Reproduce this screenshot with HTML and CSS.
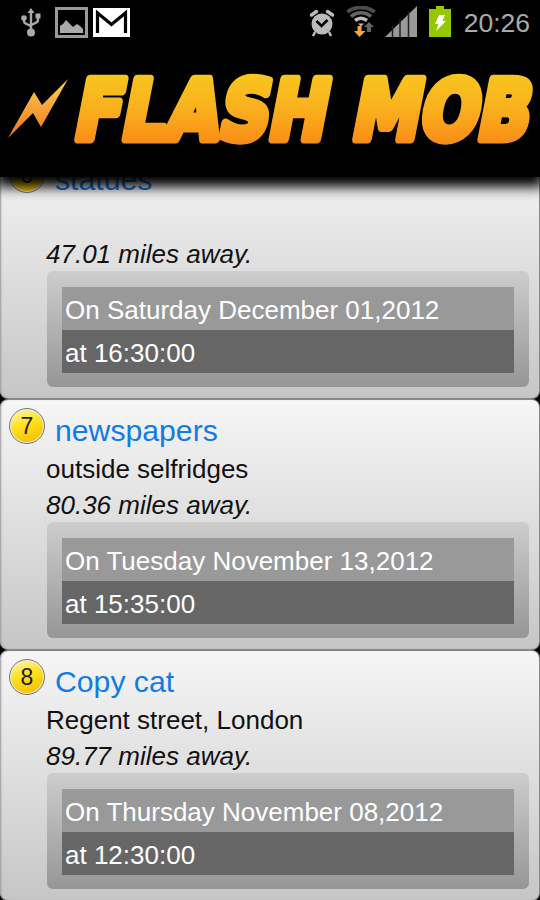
FILE: index.html
```html
<!DOCTYPE html>
<html>
<head>
  <meta charset="utf-8">
  <title>Flash Mob</title>
  <link rel="stylesheet" href="styles.css">
</head>
<body>
  <header class="header">
    <div class="statusbar">
      <svg class="usb" width="22" height="30" viewBox="0 0 22 30" fill="none" stroke="#aaa" stroke-width="2.400">
        <path d="M11 4v20M4 10v3c0 4 7 3 7 6M18 8v4c0 4-7 3-7 6"/>
        <path d="M11 0l3.500 5h-7z" fill="#aaa" stroke="none"/>
        <circle cx="4" cy="10" r="2.800" fill="#aaa" stroke="none"/>
        <rect x="15.500" y="5.500" width="5" height="5" fill="#aaa" stroke="none"/>
        <circle cx="11" cy="24.500" r="4" fill="#aaa" stroke="none"/>
      </svg>
      <svg class="picture" width="33" height="31" viewBox="0 0 33 31">
        <rect x="1.500" y="1.500" width="30" height="28" fill="#000" stroke="#999" stroke-width="3"/>
        <path d="M5 26v-7l3-2 3-4 4 4 3 3 4-3 3 2 3 3v4z" fill="#aaa"/>
      </svg>
      <svg class="mail" width="37" height="29" viewBox="0 0 37 29">
        <rect width="37" height="29" fill="#fff"/>
        <path d="M4.500 25V5L18.500 16.500 32.500 5v20" fill="none" stroke="#000" stroke-width="3.200"/>
      </svg>
      <svg class="alarm" width="26" height="28" viewBox="0 0 26 28">
        <circle cx="13" cy="15" r="10.500" fill="#bbb"/>
        <path d="M2.500 6l5-3.500M23.500 6l-5-3.500" stroke="#bbb" stroke-width="3.500" stroke-linecap="round"/>
        <path d="M6 23l-2 4M20 23l2 4" stroke="#bbb" stroke-width="2.500"/>
        <path d="M7.500 12l5 5 6-6" fill="none" stroke="#000" stroke-width="2.600"/>
      </svg>
      <svg class="wifi" width="32" height="31" viewBox="0 0 32 31" fill="none">
        <path d="M1.500 6c7-6 20-6 27 0" stroke="#4c4c4c" stroke-width="4"/>
        <path d="M5 10.500c6-5 14-5 20 0" stroke="#666" stroke-width="3.500"/>
        <path d="M9 14.500c4-3 8-3 12 0" stroke="#bbb" stroke-width="3.500"/>
        <path d="M12 17.500h6l-3 3z" fill="#bbb"/>
        <path d="M11.500 20h4v5h4l-6 6-5.500-6h3.500z" fill="#f7a540"/>
        <path d="M23 16l5 5h-3v5h-4v-5h-3z" fill="#666"/>
      </svg>
      <svg class="signal" width="32" height="31" viewBox="0 0 32 31">
        <path d="M0 31L32 0v31z" fill="#999"/>
        <path d="M7.500 20v11M15 13v18M23.500 5v26" stroke="#222" stroke-width="1.500"/>
      </svg>
      <svg class="battery" width="22" height="31" viewBox="0 0 22 31">
        <path d="M7 0h8v3h7v28H0V3h7z" fill="#96c800"/>
        <path d="M10 9h6l-2.500 6H17L7 25l2.500-7H6z" fill="#fff"/>
      </svg>
      <span class="clock">20:26</span>
    </div>
    <svg class="logo" width="540" height="131" viewBox="0 46 540 131">
      <defs>
        <linearGradient id="gold" gradientUnits="userSpaceOnUse" x1="0" y1="75" x2="0" y2="144">
          <stop offset="0" stop-color="#f8c51f"/>
          <stop offset="0.500" stop-color="#fab01d"/>
          <stop offset="1" stop-color="#f98b17"/>
        </linearGradient>
        <linearGradient id="bolt" gradientUnits="userSpaceOnUse" x1="0" y1="80" x2="0" y2="138">
          <stop offset="0" stop-color="#fbd050"/>
          <stop offset="1" stop-color="#f3741f"/>
        </linearGradient>
      </defs>
      <path d="M68 79L41 127 33 113 8 138 34 92 42 105z" fill="url(#bolt)"/>
      <g class="wordmark" transform="translate(0 144) skewX(-11) translate(0 -144)">
        <text x="71" y="139.500" textLength="252" lengthAdjust="spacingAndGlyphs">FLASH</text>
        <text x="349" y="139.500" textLength="177" lengthAdjust="spacingAndGlyphs">MOB</text>
      </g>
    </svg>
  </header>

  <main class="list">
    <div class="card">
      <div class="title"><span class="number">6</span>statues</div>
      <div class="place"></div>
      <div class="distance">47.01 miles away.</div>
      <div class="when">
        <div class="date">On Saturday December 01,2012</div>
        <div class="time">at 16:30:00</div>
      </div>
    </div>
    <div class="card">
      <div class="title"><span class="number">7</span>newspapers</div>
      <div class="place">outside selfridges</div>
      <div class="distance">80.36 miles away.</div>
      <div class="when">
        <div class="date">On Tuesday November 13,2012</div>
        <div class="time">at 15:35:00</div>
      </div>
    </div>
    <div class="card">
      <div class="title"><span class="number">8</span>Copy cat</div>
      <div class="place">Regent street, London</div>
      <div class="distance">89.77 miles away.</div>
      <div class="when">
        <div class="date">On Thursday November 08,2012</div>
        <div class="time">at 12:30:00</div>
      </div>
    </div>
  </main>
</body>
</html>
```
FILE: styles.css
```css
* {
  box-sizing: border-box;
}

body {
  margin: 0;
  height: 900px;
  overflow: hidden;
  background: #000;
  font-family: "Liberation Sans", Arial, sans-serif;
  font-size: 26px;
  color: #111;
}

.header {
  position: relative;
  z-index: 1;
  height: 177px;
  background: #000;
  box-shadow: 0 6px 12px 4px #000;
}

.statusbar {
  display: flex;
  height: 46px;
  padding: 6px 10px 0 20px;
}

.usb {
  margin-top: 2px;
}

.picture {
  margin: 1px 0 0 13px;
}

.mail {
  margin: 2px 0 0 5px;
}

.alarm {
  margin: 3px 0 0 auto;
}

.wifi {
  margin-left: 11px;
}

.signal {
  margin-left: 7px;
}

.battery {
  margin-left: 12px;
}

.clock {
  margin-left: 13px;
  line-height: 34px;
  font-size: 26.5px;
  color: #aaa;
}

.logo {
  display: block;
}

.wordmark {
  font-family: "DejaVu Sans", sans-serif;
  font-weight: bold;
  font-size: 82px;
  fill: url(#gold);
  stroke: url(#gold);
  stroke-width: 9px;
  stroke-linejoin: round;
}

.list {
  margin-top: -29px;
}

.card {
  height: 251px;
  padding: 7px 10px 0 9px;
  border: 1px solid #888;
  border-width: 1px 1px 1px 0;
  border-radius: 8px;
  background: linear-gradient(#f6f6f6, #c6c6c6);
  box-shadow: inset 2px 0 2px -1px #999;
}

.title {
  display: flex;
  height: 43px;
  line-height: 47px;
  font-size: 30.2px;
  color: #127be6;
}

.number {
  width: 36px;
  height: 36px;
  margin: 1px 10px 0 0;
  border: 1px solid #777;
  border-radius: 50%;
  background: linear-gradient(160deg, #fff4b0 5%, #ffe11c 45%, #f5b800);
  box-shadow: inset 0 0 0 1px #eee;
  line-height: 35px;
  font-size: 23px;
  text-align: center;
  color: #222;
}

.place,
.distance {
  height: 36px;
  padding-left: 37px;
  line-height: 38px;
}

.distance {
  font-style: italic;
}

.when {
  height: 116px;
  margin-left: 38px;
  padding: 16px 15px;
  border-radius: 6px;
  background: linear-gradient(#cdcdcd, #969696);
  color: #fff;
}

.date,
.time {
  height: 43px;
  padding-left: 3px;
  line-height: 47px;
  background: #999;
}

.time {
  background: #666;
}
```
